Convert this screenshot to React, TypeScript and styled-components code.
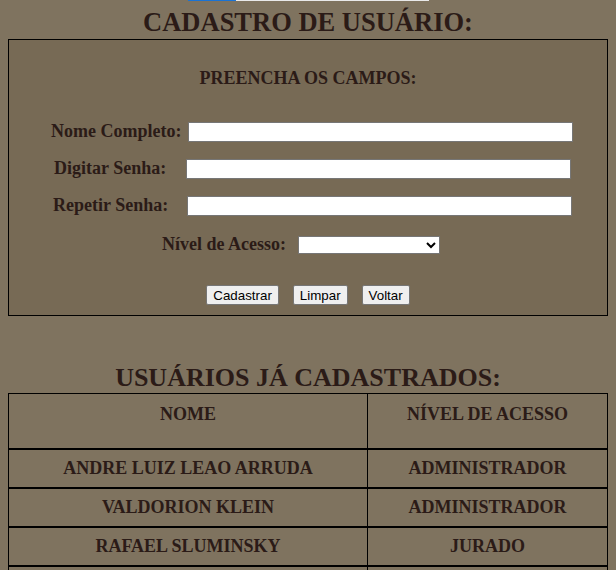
import React from 'react';
import styled, { createGlobalStyle } from 'styled-components';

const GlobalStyle = createGlobalStyle`
  html, body {
    margin: 0;
    padding: 0;
    background-color: #7f735f;
  }
  body {
    font-family: 'Liberation Serif', 'Times New Roman', serif;
    color: #2b1b17;
  }
`;

const Page = styled.div`
  padding: 0 8px;
  display: flex;
  flex-direction: column;
`;

const Progress = styled.div`
  align-self: center;
  width: 241px;
  height: 1px;
  background-color: #e9e9e9;
  display: flex;
`;

const ProgressFill = styled.div`
  height: 100%;
  background-color: #1a73d4;
`;

const Heading = styled.h1<{ $top: number; $size: number }>`
  margin: ${(p) => p.$top}px 0 0;
  font-size: ${(p) => p.$size}px;
  line-height: 30px;
  font-weight: bold;
  text-align: center;
`;

const Panel = styled.div`
  margin-top: 2px;
  border: 1px solid #000;
  background-color: #776a55;
  height: 275px;
  display: flex;
  flex-direction: column;
`;

const SubTitle = styled.h3`
  margin: 28px 0 0;
  font-size: 18px;
  line-height: 20px;
  font-weight: bold;
  text-align: center;
`;

const Fields = styled.div`
  margin-top: 33px;
  display: flex;
  flex-direction: column;
  gap: 17px;
`;

interface FieldRowProps {
  $labelStart: number;
  $fieldStart: number;
  $shift?: number;
}

const FieldRow = styled.div<FieldRowProps>`
  display: grid;
  grid-template-columns: ${(p) => p.$fieldStart - 9}px auto;
  align-items: center;
  height: 20px;
  margin-top: ${(p) => p.$shift ?? 0}px;

  & > label {
    padding-left: ${(p) => p.$labelStart - 9}px;
  }
`;

const Label = styled.label`
  font-size: 18px;
  font-weight: bold;
  white-space: nowrap;
`;

const TextInput = styled.input`
  box-sizing: border-box;
  width: 385px;
  height: 20px;
  margin: 0;
  border: 1px solid #767676;
  background: #fff;
`;

const Select = styled.select`
  box-sizing: border-box;
  width: 142px;
  height: 18px;
  margin: 0;
  border: 1px solid #767676;
  background: #fff;
  font-size: 12px;
`;

const Buttons = styled.div`
  margin-top: 31px;
  display: flex;
  justify-content: center;
  gap: 14px;
`;

const Button = styled.button`
  font-family: 'Liberation Sans', Arial, sans-serif;
  font-size: 13.33px;
  height: 20px;
  padding: 1px 6px;
  color: #000;
  background-color: #efefef;
  border: 1px solid #767676;
  border-radius: 2px;
`;

const Table = styled.table`
  width: 100%;
  border-collapse: collapse;
  border: 1px solid #000;
`;

const HeadCell = styled.th<{ $divider?: boolean }>`
  height: 44px;
  padding: 10px 0 0;
  vertical-align: top;
  font-size: 18px;
  font-weight: bold;
  border-left: ${(p) => (p.$divider ? '1px solid #000' : 'none')};
`;

const Cell = styled.td<{ $divider?: boolean }>`
  height: 37px;
  padding: 0;
  text-align: center;
  font-size: 18px;
  font-weight: bold;
  border-top: 2px solid #000;
  border-left: ${(p) => (p.$divider ? '1px solid #000' : 'none')};
`;

const users = [
  { name: 'ANDRE LUIZ LEAO ARRUDA', level: 'ADMINISTRADOR' },
  { name: 'VALDORION KLEIN', level: 'ADMINISTRADOR' },
  { name: 'RAFAEL SLUMINSKY', level: 'JURADO' },
  { name: '', level: '' },
];

const App: React.FC = () => {
  return (
    <>
      <GlobalStyle />
      <Page>
        <Progress>
          <ProgressFill style={{ width: '20%' }} />
        </Progress>
        <Heading $top={6} $size={26.5}>
          CADASTRO DE USUÁRIO:
        </Heading>
        <Panel>
          <SubTitle>PREENCHA OS CAMPOS:</SubTitle>
          <Fields>
            <FieldRow $labelStart={51} $fieldStart={188}>
              <Label htmlFor="nome">Nome Completo:</Label>
              <TextInput id="nome" type="text" />
            </FieldRow>
            <FieldRow $labelStart={54} $fieldStart={186}>
              <Label htmlFor="senha">Digitar Senha:</Label>
              <TextInput id="senha" type="password" />
            </FieldRow>
            <FieldRow $labelStart={53} $fieldStart={187}>
              <Label htmlFor="senha2">Repetir Senha:</Label>
              <TextInput id="senha2" type="password" />
            </FieldRow>
            <FieldRow $labelStart={162} $fieldStart={298} $shift={2}>
              <Label htmlFor="nivel">Nível de Acesso:</Label>
              <Select id="nivel" defaultValue="">
                <option value=""></option>
                <option value="admin">Administrador</option>
                <option value="jurado">Jurado</option>
              </Select>
            </FieldRow>
          </Fields>
          <Buttons>
            <Button type="button">Cadastrar</Button>
            <Button type="button">Limpar</Button>
            <Button type="button">Voltar</Button>
          </Buttons>
        </Panel>
        <Heading $top={47} $size={26}>
          USUÁRIOS JÁ CADASTRADOS:
        </Heading>
        <Table>
          <colgroup>
            <col style={{ width: 359 }} />
            <col />
          </colgroup>
          <thead>
            <tr>
              <HeadCell>NOME</HeadCell>
              <HeadCell $divider>NÍVEL DE ACESSO</HeadCell>
            </tr>
          </thead>
          <tbody>
            {users.map((u, i) => (
              <tr key={i}>
                <Cell>{u.name}</Cell>
                <Cell $divider>{u.level}</Cell>
              </tr>
            ))}
          </tbody>
        </Table>
      </Page>
    </>
  );
};

export default App;
